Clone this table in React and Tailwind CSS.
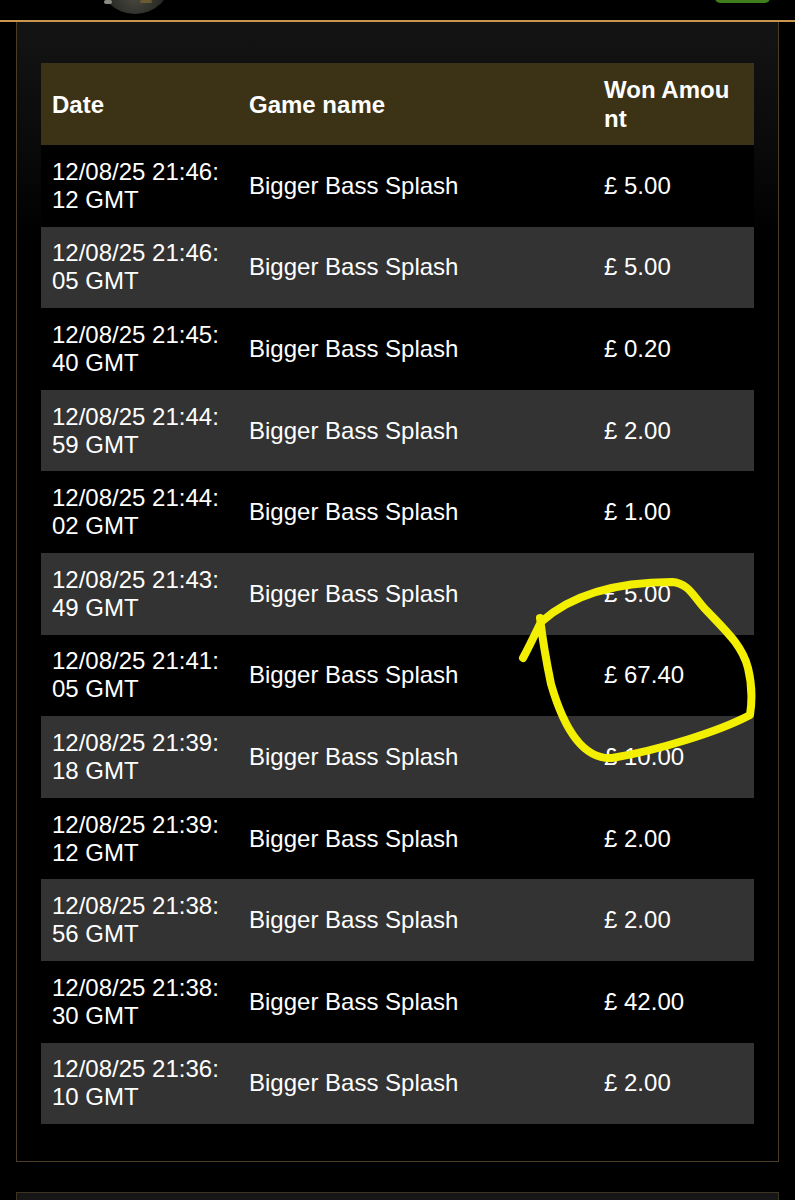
import React from "react";

const rows = [
  ["12/08/25 21:46:", "12 GMT", "£ 5.00"],
  ["12/08/25 21:46:", "05 GMT", "£ 5.00"],
  ["12/08/25 21:45:", "40 GMT", "£ 0.20"],
  ["12/08/25 21:44:", "59 GMT", "£ 2.00"],
  ["12/08/25 21:44:", "02 GMT", "£ 1.00"],
  ["12/08/25 21:43:", "49 GMT", "£ 5.00"],
  ["12/08/25 21:41:", "05 GMT", "£ 67.40"],
  ["12/08/25 21:39:", "18 GMT", "£ 10.00"],
  ["12/08/25 21:39:", "12 GMT", "£ 2.00"],
  ["12/08/25 21:38:", "56 GMT", "£ 2.00"],
  ["12/08/25 21:38:", "30 GMT", "£ 42.00"],
  ["12/08/25 21:36:", "10 GMT", "£ 2.00"],
];

export default function App() {
  return (
    <div className="relative w-[795px] h-[1200px] overflow-hidden bg-black text-white [font-family:'Liberation_Sans',Arial,sans-serif]">
      {/* top header strip */}
      <div className="relative h-[20px] bg-black overflow-hidden">
        <div className="absolute left-[98px] top-[-60px] w-[74px] h-[74px] rounded-full bg-[radial-gradient(circle_at_50%_75%,#4a4a42_0%,#2a2a26_40%,#0c0c0c_72%)]" />
        <div className="absolute left-[104px] top-[0px] w-[8px] h-[4px] rounded-full bg-[#8a8a84]" />
        <div className="absolute left-[140px] top-[0px] w-[12px] h-[3px] rounded-sm bg-[#6a5a30]" />
        <div className="absolute left-[715px] top-[-10px] w-[55px] h-[13px] rounded-[5px] bg-[#3f7d1e]" />
      </div>
      <div className="h-[2px] bg-[#c8964e]" />

      {/* main panel */}
      <div className="mx-[16px] border-x border-b border-[#4a3d24] bg-[linear-gradient(to_bottom,#141414_0px,#0a0a0a_120px,#000_220px)] px-[24px] pt-[41px] pb-[37px]">
        <table className="w-full table-fixed border-collapse text-left [font-family:'Liberation_Sans',Arial,sans-serif]">
          <colgroup>
            <col className="w-[197px]" />
            <col className="w-[355px]" />
            <col className="w-[161px]" />
          </colgroup>
          <thead>
            <tr className="h-[82px] bg-[#3c3317]">
              <th className="px-[11px] align-middle text-[24px] leading-[29px] font-bold">Date</th>
              <th className="px-[11px] align-middle text-[24px] leading-[29px] font-bold">Game name</th>
              <th className="px-[11px] align-middle text-[24px] leading-[29px] font-bold">
                Won Amou
                <br />
                nt
              </th>
            </tr>
          </thead>
          <tbody>
            {rows.map((r, i) => (
              <tr key={i} className={`h-[81.6px] ${i % 2 === 1 ? "bg-[#333333]" : "bg-black"}`}>
                <td className="px-[11px] align-middle text-[24px] leading-[28px]">
                  {r[0]}
                  <br />
                  {r[1]}
                </td>
                <td className="px-[11px] align-middle text-[24px] leading-[28px]">Bigger Bass Splash</td>
                <td className="px-[11px] align-middle text-[24px] leading-[28px]">{r[2]}</td>
              </tr>
            ))}
          </tbody>
        </table>
      </div>

      {/* next panel */}
      <div className="mx-[16px] mt-[30px] h-[40px] border-x border-t border-[#3d3322] bg-[#161616]" />

      {/* hand-drawn annotation */}
      <svg
        className="pointer-events-none absolute left-0 top-0"
        width="795"
        height="1200"
        viewBox="0 0 795 1200"
      >
        <path
          d="M523,658 C530,645 536,632 541,622 C570,596 615,582 672,582 C690,583 695,600 708,612 C725,630 742,645 748,668 C753,688 752,702 750,715 C720,731 660,750 612,758 C580,760 562,722 551,684 C545,655 542,635 540,618"
          fill="none"
          stroke="#f3ef00"
          strokeWidth="8"
          strokeLinecap="round"
          strokeLinejoin="round"
        />
      </svg>
    </div>
  );
}
